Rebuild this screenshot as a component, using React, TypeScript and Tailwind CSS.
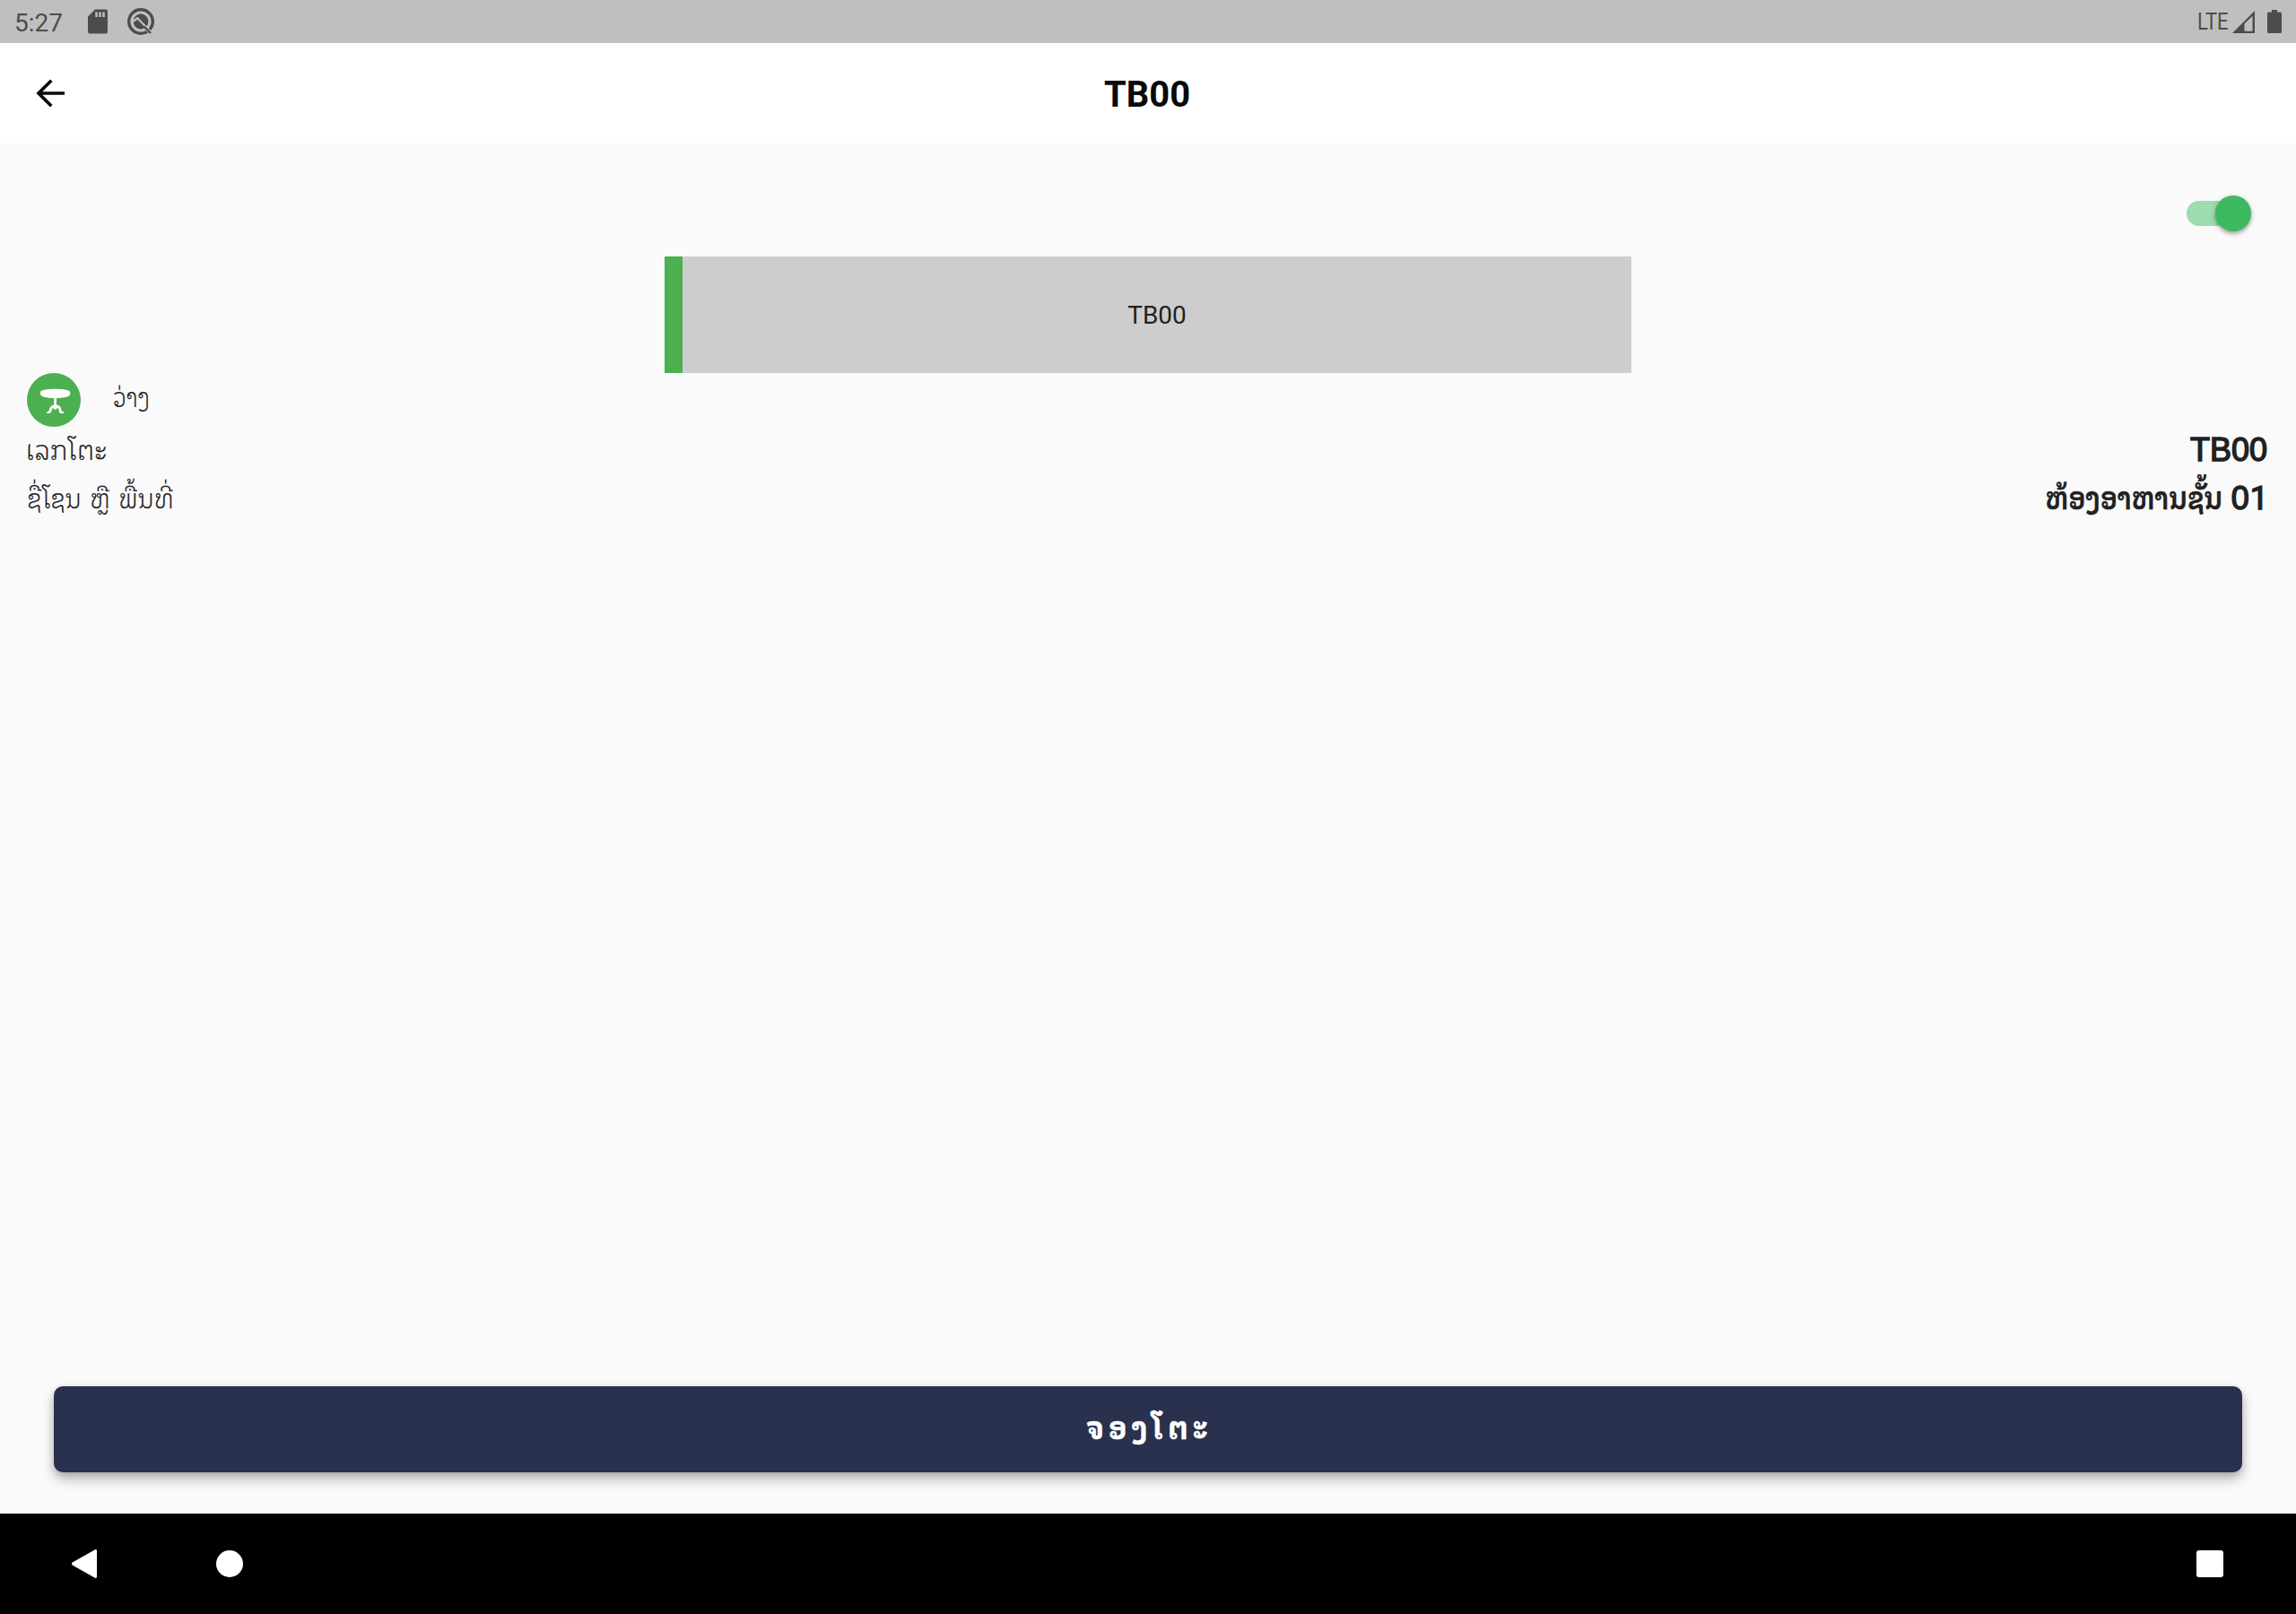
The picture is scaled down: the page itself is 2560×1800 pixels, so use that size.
import React from 'react';

function SdCardIcon() {
  return (
    <svg className="ml-[27px] h-[28px] w-[22px]" viewBox="0 0 22 28">
      <path
        fillRule="evenodd"
        fill="#4c4c4c"
        d="M8 0.5H19.5A2.5 2.5 0 0 1 22 3V25A2.5 2.5 0 0 1 19.500 27.500H2.500A2.500 2.500 0 0 1 0 25V8.500ZM8.300 3.500V9H10.800V3.500ZM12.300 3.500V9H14.800V3.500ZM16.300 3.500V9H18.800V3.500Z"
      />
    </svg>
  );
}

function DebugIcon() {
  return (
    <svg className="ml-[21px] h-[32px] w-[32px]" viewBox="0 0 32 32" fill="none">
      <circle cx="16" cy="16" r="13.300" stroke="#4c4c4c" strokeWidth="3.400" />
      <circle cx="16" cy="16" r="8.400" fill="#4c4c4c" />
      <path d="M6.500 16.500L12.300 12.300L27 27.500" stroke="#bfbfbf" strokeWidth="2.200" />
      <path d="M22 25L28 31" stroke="#bfbfbf" strokeWidth="2" />
      <path d="M19.500 21.500L27 29" stroke="#4c4c4c" strokeWidth="2.400" />
    </svg>
  );
}

function StatusBar() {
  return (
    <header className="flex h-12 items-start bg-[#bfbfbf] text-[#4c4c4c]">
      <div className="flex h-12 items-center pl-4">
        <span className="w-[55px] whitespace-nowrap pt-[3px] text-[28px] leading-[32px]">5:27</span>
        <SdCardIcon />
        <DebugIcon />
      </div>
      <div className="ml-auto flex h-12 items-center pr-4">
        <span className="w-[39px] origin-left scale-x-[0.88] pt-px text-[25px] leading-[32px]">LTE</span>
        <svg className="h-[25px] w-[25px]" viewBox="0 0 25 25">
          <path fillRule="evenodd" fill="#4c4c4c" d="M0 25L25 0V25ZM13.500 14.500V22.800H22.500V5.800Z" />
        </svg>
        <svg className="ml-[14px] h-[26px] w-4" viewBox="0 0 16 26">
          <path fill="#4c4c4c" d="M5 0H11V2.500H14.500A1.500 1.500 0 0 1 16 4V24.500A1.500 1.500 0 0 1 14.500 26H1.500A1.500 1.500 0 0 1 0 24.500V4A1.500 1.500 0 0 1 1.500 2.500H5Z" />
        </svg>
      </div>
    </header>
  );
}

function AppBar() {
  return (
    <div className="grid h-28 grid-cols-3 items-center bg-white px-10">
      <svg className="h-8 w-8" viewBox="0 0 32 32" fill="none" stroke="#0a0a0a" strokeWidth="3.700">
        <path d="M32 16H3M17.300 1.700L3 16L17.300 30.300" />
      </svg>
      <h1 className="pr-[2px] pt-1 text-center text-[40px] font-bold leading-[48px] text-[#0a0a0a]">TB00</h1>
    </div>
  );
}

function Toggle() {
  return (
    <div className="relative h-10 w-[72px]">
      <div className="mt-[6px] h-7 w-[66px] rounded-full bg-[#9ddcb0]" />
      <div className="absolute right-0 top-0 h-10 w-10 rounded-full bg-[#3dba60] shadow-[0_3px_4px_rgba(0,0,0,0.25),0_1px_6px_rgba(0,0,0,0.15)]" />
    </div>
  );
}

function TableIcon() {
  return (
    <div className="flex h-[60px] w-[60px] items-center justify-center rounded-full bg-[#4caf50]">
      <svg className="h-[60px] w-[60px]" viewBox="0 0 60 60" fill="none">
        <path fill="#fff" d="M31.500 17.800C41 17.800 48.200 18.900 48.200 21.500V23.500C48.200 26.500 41 28 31.500 28S15 26.500 15 23.500V21.500C15 18.900 22 17.800 31.500 17.800Z" />
        <path fill="#fff" d="M30.200 27H33V35.500C37 36 38.200 38 38.500 41.500C38.700 43 39.500 43 41 43V45H37.800C35.800 45 35.800 42.500 35.500 40.500C35.200 39 34.500 39.200 33.500 39.300C33 40.300 32.500 40.800 31.600 40.800S30.200 40.300 29.700 39.300C28.500 39.200 28.300 39.500 27.800 41C27 44 26 45 24 45H22.300V43C24 43 24.300 43 24.800 41C25.500 37.500 27.500 36 30.200 35.500Z" />
      </svg>
    </div>
  );
}

export default function App() {
  return (
    <div className="flex h-[1800px] w-[2560px] flex-col overflow-hidden bg-[#fafafa] font-[Roboto,'DejaVu_Sans',sans-serif] text-[#212121]">
      <StatusBar />
      <AppBar />
      <main className="flex flex-1 flex-col">
        <div className="flex justify-end pr-[50px] pt-[58px]">
          <Toggle />
        </div>
        <div className="mx-auto mt-7 flex h-[130px] w-[1078px] items-center justify-center border-l-[20px] border-[#4caf50] bg-[#cdcdcd] text-[28px]">
          <span className="pt-[2px]">TB00</span>
        </div>
        <div className="flex h-[60px] items-center pl-[30px]">
          <TableIcon />
          <span className="ml-9 origin-left -translate-y-[5px] scale-x-[0.82] font-['Noto_Sans_Lao_Looped','DejaVu_Sans',sans-serif] text-[30px] font-light leading-[40px] [-webkit-text-stroke:0.2px_#212121]">ວ່າງ</span>
        </div>
        <div className="flex h-[54px] items-center justify-between pl-[29px] pr-8">
          <span className="origin-left -translate-y-[3px] scale-x-[0.915] font-['Noto_Sans_Lao_Looped','DejaVu_Sans',sans-serif] text-[30px] font-light leading-[40px] [-webkit-text-stroke:0.2px_#212121]">ເລກໂຕະ</span>
          <span className="-translate-y-px font-['Liberation_Sans',sans-serif] text-[36px] leading-[40px] [-webkit-text-stroke:1.500px_#212121]">TB00</span>
        </div>
        <div className="flex h-[54px] items-center justify-between pl-[30px] pr-8">
          <span className="origin-left -translate-y-[3px] scale-x-[0.875] font-['Noto_Sans_Lao_Looped','DejaVu_Sans',sans-serif] text-[30px] font-light leading-[40px] [word-spacing:3px] [-webkit-text-stroke:0.2px_#212121]">ຊື່ໂຊນ ຫຼື ພື້ນທີ່</span>
          <span className="flex -translate-y-[3px] items-baseline whitespace-pre font-['Liberation_Sans','DejaVu_Sans',sans-serif] text-[36px] leading-[40px]">
            <span className="origin-right scale-x-[0.83] font-['Noto_Sans_Lao_Looped','DejaVu_Sans',sans-serif] text-[35px] font-semibold [-webkit-text-stroke:0.5px_#212121]">ຫ້ອງອາຫານຊັ້ນ</span>
            <span className="[-webkit-text-stroke:1.500px_#212121]"> 0<span className="-mr-px ml-px font-[Roboto] text-[36px]">1</span></span>
          </span>
        </div>
        <button className="mx-[60px] mb-[46px] mt-auto flex h-24 items-center justify-center rounded-[10px] bg-[#29314f] font-['Noto_Sans_Lao_Looped','DejaVu_Sans',sans-serif] text-[34px] font-bold tracking-[6px] text-white shadow-[0_8px_14px_rgba(0,0,0,0.26),0_2px_7px_rgba(0,0,0,0.12)]">
          <span className="-translate-y-[5px] translate-x-[2px] scale-x-90 [-webkit-text-stroke:0.6px_#ffffff]">ຈອງໂຕະ</span>
        </button>
      </main>
      <nav className="flex h-28 items-center bg-black pl-20 pr-[81px]">
        <svg className="h-8 w-7" viewBox="0 0 28 32">
          <path fill="#fff" d="M0.700 14.600L25.500 0.400C27 -0.300 28 0.300 28 1.500V30.500C28 31.700 27 32.300 25.500 31.600L0.700 17.400C-0.200 16.800 -0.200 15.200 0.700 14.600Z" />
        </svg>
        <div className="ml-[133px] h-[30px] w-[30px] rounded-full bg-white" />
        <div className="ml-auto h-[30px] w-[30px] rounded-[3px] bg-white" />
      </nav>
    </div>
  );
}
